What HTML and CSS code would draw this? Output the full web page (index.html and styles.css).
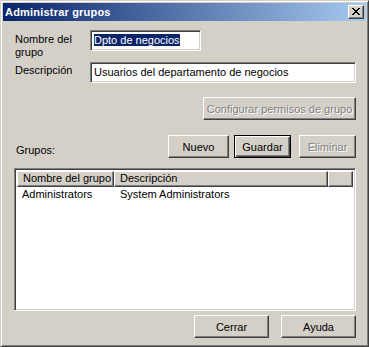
FILE: index.html
```html
<!DOCTYPE html>
<html lang="es">
<head>
<meta charset="utf-8">
<title>Administrar grupos</title>
<link rel="stylesheet" href="styles.css">
</head>
<body>
<div class="window">
  <div class="titlebar">
    <span class="title">Administrar grupos</span>
    <div class="close">
      <svg width="8" height="7" viewBox="0 0 8 7" shape-rendering="crispEdges">
        <g fill="#000">
          <rect x="0" y="0" width="2" height="1"/><rect x="6" y="0" width="2" height="1"/>
          <rect x="1" y="1" width="2" height="1"/><rect x="5" y="1" width="2" height="1"/>
          <rect x="2" y="2" width="4" height="1"/>
          <rect x="3" y="3" width="2" height="1"/>
          <rect x="2" y="4" width="4" height="1"/>
          <rect x="1" y="5" width="2" height="1"/><rect x="5" y="5" width="2" height="1"/>
          <rect x="0" y="6" width="2" height="1"/><rect x="6" y="6" width="2" height="1"/>
        </g>
      </svg>
    </div>
  </div>
  <div class="content">
    <div class="form">
      <div class="label name-label">Nombre del grupo</div>
      <div class="field name-field"><span class="sel">Dpto de negocios</span></div>
      <div class="label desc-label">Descripción</div>
      <div class="field desc-field">Usuarios del departamento de negocios</div>
    </div>
    <div class="perm-row">
      <div class="btn disabled perm-btn">Configurar permisos de grupo</div>
    </div>
    <div class="actions-row">
      <div class="label groups-label">Grupos:</div>
      <div class="actions">
        <div class="btn nuevo">Nuevo</div>
        <div class="btn default guardar">Guardar</div>
        <div class="btn disabled eliminar">Eliminar</div>
      </div>
    </div>
    <div class="listview">
      <div class="lv-header">
        <div class="hcell c1">Nombre del grupo</div>
        <div class="hcell c2">Descripción</div>
        <div class="hcell c3"></div>
      </div>
      <div class="lv-row">
        <div class="cell c1">Administrators</div>
        <div class="cell c2">System Administrators</div>
      </div>
    </div>
    <div class="bottom">
      <div class="btn bottom-btn">Cerrar</div>
      <div class="btn bottom-btn">Ayuda</div>
    </div>
  </div>
</div>
</body>
</html>
```
FILE: styles.css
```css
* { box-sizing: border-box; }
html, body { margin: 0; padding: 0; background: #d4d0c8; }
body {
  font-family: "Liberation Sans", Arial, sans-serif;
  font-size: 11px;
  color: #000;
}
.window {
  width: 369px;
  height: 347px;
  background: #d4d0c8;
  border: 1px solid;
  border-color: #d4d0c8 #404040 #404040 #d4d0c8;
  box-shadow: inset 1px 1px #fff, inset -1px -1px #808080;
  padding: 2px;
  display: flex;
  flex-direction: column;
}
.titlebar {
  height: 18px;
  background: linear-gradient(to right, #0a246a, #a6caf0);
  display: flex;
  align-items: center;
  justify-content: space-between;
  padding: 0 2px 0 2px;
}
.title {
  color: #fff;
  font-weight: bold;
  font-size: 11px;
  letter-spacing: 0.2px;
}
.close {
  width: 16px;
  height: 14px;
  background: #d4d0c8;
  border: 1px solid;
  border-color: #fff #404040 #404040 #fff;
  box-shadow: inset -1px -1px #808080;
  display: flex;
  padding: 2px 0 0 3px;
}
.content {
  flex: 1;
  padding: 9px 10px 0 11px;
  display: flex;
  flex-direction: column;
}
.form {
  display: grid;
  grid-template-columns: 76px 1fr;
  grid-template-rows: 21px 21px;
  row-gap: 11px;
}
.label { line-height: 13px; }
.name-label { width: 62px; height: 21px; padding-top: 3px; padding-left: 1px; }
.desc-label { padding-top: 2px; padding-left: 1px; }
.field {
  height: 21px;
  background: #fff;
  border: 1px solid;
  border-color: #808080 #fff #fff #808080;
  box-shadow: inset 1px 1px #404040, inset -1px -1px #d4d0c8;
  padding: 3px 2px 0 3px;
  line-height: 13px;
  white-space: nowrap;
  overflow: hidden;
}
.name-field { width: 111px; }
.sel { background: #0a246a; color: #fff; }
.btn {
  height: 23px;
  background: #d4d0c8;
  border: 1px solid;
  border-color: #fff #404040 #404040 #fff;
  box-shadow: inset -1px -1px #808080;
  display: flex;
  align-items: center;
  justify-content: center;
  white-space: nowrap;
}
.btn.default {
  border-color: #000;
  box-shadow: inset 1px 1px #fff, inset -1px -1px #404040, inset -2px -2px #808080;
}
.btn.disabled {
  color: #808080;
  text-shadow: 1px 1px #fff;
}
.perm-row {
  display: flex;
  justify-content: flex-end;
  margin-top: 14px;
}
.perm-btn { width: 153px; }
.actions-row {
  display: flex;
  justify-content: space-between;
  align-items: flex-end;
  margin-top: 15px;
}
.groups-label { padding-left: 2px; padding-bottom: 1px; }
.actions { display: flex; gap: 5px; }
.nuevo { width: 61px; }
.guardar { width: 57px; }
.eliminar { width: 57px; margin-left: 3px; }
.listview {
  margin-top: 10px;
  height: 143px;
  background: #fff;
  border: 1px solid;
  border-color: #808080 #fff #fff #808080;
  box-shadow: inset 1px 1px #404040, inset -1px -1px #d4d0c8;
  padding: 2px;
  display: flex;
  flex-direction: column;
}
.lv-header { display: flex; height: 16px; }
.hcell {
  background: #d4d0c8;
  border: 1px solid;
  border-color: #fff #404040 #404040 #fff;
  box-shadow: inset -1px -1px #808080;
  line-height: 13px;
  padding-left: 5px;
  white-space: nowrap;
}
.c1 { width: 97px; }
.c2 { width: 214px; }
.c3 { flex: 1; }
.lv-row { display: flex; height: 15px; line-height: 15px; }
.cell { padding-left: 5px; white-space: nowrap; }
.lv-row .c2 { padding-left: 6px; }
.bottom {
  display: flex;
  justify-content: flex-end;
  gap: 12px;
  margin-top: 4px;
}
.bottom-btn { width: 75px; }
```
